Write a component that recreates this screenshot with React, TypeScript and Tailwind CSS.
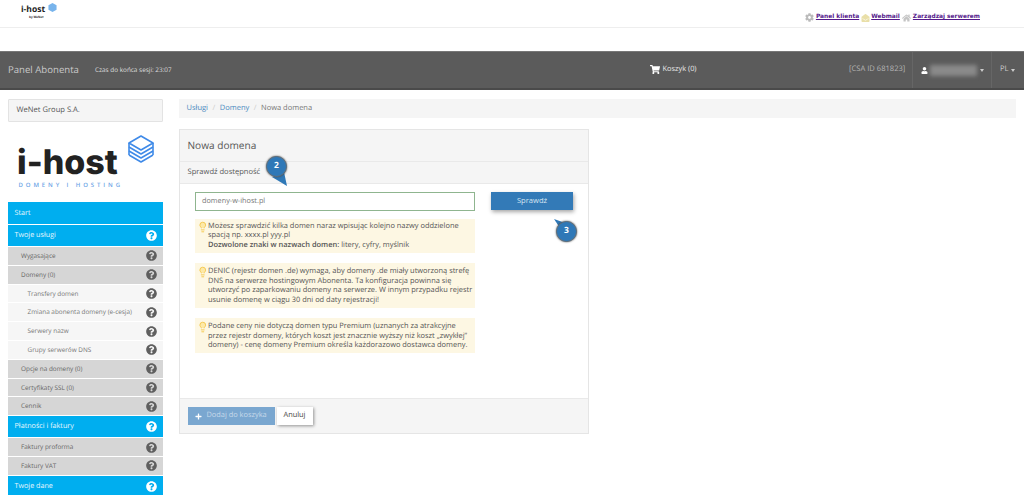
import { FaQuestionCircle, FaShoppingCart, FaUser, FaPlus, FaCog, FaHome, FaEnvelopeOpen } from 'react-icons/fa'
import { Lightbulb } from 'lucide-react'

const menu = [
  { label: 'Start', level: 0, h: 'h-[22px]', noIcon: true },
  { label: 'Twoje usługi', level: 0, h: 'h-[21px]' },
  { label: 'Wygasające', level: 1, h: 'h-[17.8px]' },
  { label: 'Domeny (0)', level: 1, h: 'h-[17.8px]' },
  { label: 'Transfery domen', level: 2, h: 'h-[17.8px]' },
  { label: 'Zmiana abonenta domeny (e-cesja)', level: 2, h: 'h-[17.8px]' },
  { label: 'Serwery nazw', level: 2, h: 'h-[17.8px]' },
  { label: 'Grupy serwerów DNS', level: 2, h: 'h-[17.8px]' },
  { label: 'Opcje na domeny (0)', level: 1, h: 'h-[17.8px]' },
  { label: 'Certyfikaty SSL (0)', level: 1, h: 'h-[17.8px]' },
  { label: 'Cennik', level: 1, h: 'h-[17.8px]' },
  { label: 'Płatności i faktury', level: 0, h: 'h-[21px]' },
  { label: 'Faktury proforma', level: 1, h: 'h-[17.8px]' },
  { label: 'Faktury VAT', level: 1, h: 'h-[17.8px]' },
  { label: 'Twoje dane', level: 0, h: 'h-[21px]' },
]

function MenuRow({ item }: { item: (typeof menu)[number] }) {
  const colors =
    item.level === 0
      ? 'bg-[#00aeef] text-[#e8f7fd] pl-[6.5px] text-[7.2px]'
      : item.level === 1
        ? 'bg-[#d6d6d6] text-[#666] pl-[13px] text-[6.4px]'
        : 'bg-[#f6f6f6] text-[#777] pl-[19.5px] text-[6.4px]'
  return (
    <div className={`flex items-center justify-between whitespace-nowrap pr-[6px] ${item.h} ${colors}`}>
      <span>{item.label}</span>
      {!item.noIcon && (
        <FaQuestionCircle className={`${item.level === 0 ? 'text-white' : 'text-[#5f5f5f]'} h-[11px] w-[11px]`} />
      )}
    </div>
  )
}

function Notice({ children, className }: { children: React.ReactNode; className: string }) {
  return (
    <div className={`flex w-[280px] bg-[#fdf7e3] pl-[2px] text-[#555] text-[7.45px] leading-[9.65px] ${className}`}>
      <Lightbulb className="mt-[-1px] mr-[-0.5px] h-[12px] w-[11.5px] shrink-0 fill-[#fde9a8] text-[#f5c94f]" strokeWidth={2} />
      <div className="whitespace-nowrap">{children}</div>
    </div>
  )
}

function Marker({ n, className }: { n: string; className: string }) {
  return (
    <div className={`absolute flex h-[21px] w-[21px] items-center justify-center rounded-full border-[1.5px] border-[#5f6f7c] bg-[#2f78b7] text-[8.5px] font-bold text-white shadow-[0_0_2px_#444] ${className}`}>
      {n}
    </div>
  )
}

function StackLogo({ className }: { className: string }) {
  return (
    <svg viewBox="0 0 26 30" className={className} fill="none" stroke="#3f8ae8" strokeWidth="1.6" strokeLinejoin="round">
      <path d="M13 1 25 8 13 15 1 8Z" />
      <path d="M1 12 13 19 25 12" />
      <path d="M1 16 13 23 25 16" />
      <path d="M1 20 13 27 25 20" />
      <path d="M1 8V20M25 8V20" />
    </svg>
  )
}

export default function App() {
  return (
    <div className="h-[495px] w-[1024px] overflow-hidden bg-white font-['Open_Sans',sans-serif] relative [text-rendering:geometricPrecision]">
      {/* top bar */}
      <div className="flex h-[28px] items-start justify-between border-b border-[#eee] pl-[21px] pr-[44px]">
        <div className="relative pt-[5px]">
          <div className="text-[8.5px] font-bold leading-[10px] text-[#222]">i-host</div>
          <div className="pl-[8px] text-[3px] font-bold leading-[4px] text-[#333]">by WeNet</div>
          <svg viewBox="0 0 10 10" className="absolute left-[27px] top-[3px] h-[9px] w-[9px]">
            <path d="M5 0 9.5 2.5V7.5L5 10 .5 7.5V2.5Z" fill="#78b4ec" />
          </svg>
        </div>
        <div className="flex items-center whitespace-nowrap pt-[13px] font-['DejaVu_Sans',sans-serif] text-[5.9px] font-bold leading-[9px] text-[#551a8b]">
          <FaCog className="h-[9px] w-[9px] text-[#bbb]" />
          <a className="ml-[2px] underline">Panel klienta</a>
          <FaEnvelopeOpen className="ml-[2px] h-[8px] w-[9px] text-[#e9dfa8]" />
          <a className="ml-[1px] underline">Webmail</a>
          <FaHome className="ml-[2px] h-[8px] w-[9px] text-[#c4c4c4]" />
          <a className="ml-[2px] underline">Zarządzaj serwerem</a>
        </div>
      </div>

      {/* navbar */}
      <div className="mt-[23px] flex h-[39px] items-center whitespace-nowrap border-t border-b-2 border-t-[#777] border-b-[#4a4a4a] bg-[#5b5b5b] pl-[8px] text-[#c9c9c9]">
        <span className="w-[71px] text-[9.6px]">Panel Abonenta</span>
        <span className="ml-[16px] w-[78px] text-[6.4px] text-[#ddd]">Czas do końca sesji: 23:07</span>
        <div className="ml-[477px] flex w-[48px] items-center text-[7.4px] text-[#e6e6e6]">
          <FaShoppingCart className="h-[9px] w-[10px] text-white" />
          <span className="ml-[2.5px]">Koszyk (0)</span>
        </div>
        <span className="ml-[151px] w-[57px] text-[7.6px] text-[#b5b5b5]">[CSA ID 681823]</span>
        <div className="ml-[6px] flex h-full w-[80px] items-center border-x border-[#666] pl-[8px]">
          <FaUser className="h-[7px] w-[7px] text-white" />
          <div className="ml-[2px] h-[11px] w-[47px] bg-[#8a8a8a] blur-[2px]" />
          <div className="ml-[3px] h-0 w-0 border-x-[2.5px] border-t-[3px] border-x-transparent border-t-[#ccc]" />
        </div>
        <span className="ml-[8px] text-[7.6px]">PL</span>
        <div className="ml-[2px] h-0 w-0 border-x-[2.5px] border-t-[3px] border-x-transparent border-t-[#ccc]" />
      </div>

      {/* content */}
      <div className="flex pl-[8px] pr-[8px] pt-[9px]">
        <aside className="w-[155px] shrink-0">
          <div className="flex h-[23px] items-center rounded-[1px] border border-[#e3e3e3] bg-[#f5f5f5] pl-[7.5px] text-[7.6px] text-[#555]">
            WeNet Group S.A.
          </div>
          <div className="relative h-[80px]">
            <div className="absolute left-[9px] top-[22px] font-['Inter',sans-serif] text-[34px] font-extrabold leading-[38px] text-[#222]">i-host</div>
            <StackLogo className="absolute left-[120px] top-[13px] h-[30px] w-[26px]" />
            <div className="absolute left-[10.5px] top-[59px] text-[6px] font-semibold leading-[8px] tracking-[2.9px] text-[#6da5e6]">DOMENY I HOSTING</div>
          </div>
          <div className="flex flex-col gap-[1px]">
            {menu.map(item => (
              <MenuRow key={item.label} item={item} />
            ))}
          </div>
        </aside>

        <main className="ml-[16px] flex-1">
          <div className="flex h-[19px] items-center bg-[#f5f5f5] pl-[7.5px] text-[7.5px]">
            <span className="text-[#4c8ac0]">Usługi</span>
            <span className="mx-[4.5px] text-[#ccc]">/</span>
            <span className="text-[#4c8ac0]">Domeny</span>
            <span className="mx-[4.5px] text-[#ccc]">/</span>
            <span className="text-[#777]">Nowa domena</span>
          </div>

          <section className="mt-[11px] w-[410px] border border-[#e5e5e5]">
            <div className="flex h-[32px] items-center border-b border-[#e9e9e9] bg-[#f5f5f5] pl-[7.5px] text-[10.1px] text-[#555]">Nowa domena</div>
            <div className="flex h-[22px] items-center border-b border-[#e9e9e9] bg-[#f5f5f5] pl-[7.5px] text-[7.55px] text-[#555]">Sprawdź dostępność</div>
            <div className="flex h-[214px] pl-[15px] pt-[8px]">
              <div className="flex flex-col">
                <div className="flex h-[19px] w-[280px] items-center border border-[#8fb58f] pl-[6px] text-[7.3px] text-[#777]">domeny-w-ihost.pl</div>
                <Notice className="mt-[8px] h-[34px] pt-[2.5px]">
                  <div>Możesz sprawdzić kilka domen naraz wpisując kolejno nazwy oddzielone</div>
                  <div>spacją np. xxxx.pl yyy.pl</div>
                  <div><b className="font-semibold">Dozwolone znaki w nazwach domen:</b> litery, cyfry, myślnik</div>
                </Notice>
                <Notice className="mt-[10px] h-[45px] pt-[4px]">
                  <div>DENIC (rejestr domen .de) wymaga, aby domeny .de miały utworzoną strefę</div>
                  <div>DNS na serwerze hostingowym Abonenta. Ta konfiguracja powinna się</div>
                  <div>utworzyć po zaparkowaniu domeny na serwerze. W innym przypadku rejestr</div>
                  <div>usunie domenę w ciągu 30 dni od daty rejestracji!</div>
                </Notice>
                <Notice className="mt-[10px] h-[35px] pt-[4px]">
                  <div>Podane ceny nie dotyczą domen typu Premium (uznanych za atrakcyjne</div>
                  <div>przez rejestr domeny, których koszt jest znacznie wyższy niż koszt „zwykłej”</div>
                  <div>domeny) - cenę domeny Premium określa każdorazowo dostawca domeny.</div>
                </Notice>
              </div>
              <button className="ml-[16px] h-[18px] w-[82px] bg-[#337ab7] text-[7.6px] text-[#d5e5f2] shadow-[1px_2px_4px_rgba(0,0,0,0.35)]">Sprawdź</button>
            </div>
            <div className="flex h-[35px] items-center border-t border-[#e9e9e9] bg-[#f5f5f5] pl-[7.5px] text-[7.4px]">
              <div className="flex h-[18px] w-[87px] items-center whitespace-nowrap bg-[#7aa7d0] pl-[7px] text-[#c6d9ea]">
                <FaPlus className="h-[7px] w-[7px] text-white" />
                <span className="ml-[5px]">Dodaj do koszyka</span>
              </div>
              <div className="ml-[2px] flex h-[18px] w-[36px] items-center justify-center bg-white text-[#444] shadow-[1px_1px_3px_rgba(0,0,0,0.4)]">Anuluj</div>
            </div>
          </section>
        </main>
      </div>

      {/* callouts */}
      <svg className="absolute left-[272px] top-[172px] h-[16px] w-[18px]" viewBox="0 0 18 16"><path d="M0 5 12 0 15 14Z" fill="#2f78b7" /></svg>
      <Marker n="2" className="left-[266px] top-[156px]" />
      <svg className="absolute left-[554px] top-[219px] h-[14px] w-[14px]" viewBox="0 0 14 14"><path d="M0 0 14 5 8 12Z" fill="#2f78b7" /></svg>
      <Marker n="3" className="left-[556px] top-[221px]" />
    </div>
  )
}
